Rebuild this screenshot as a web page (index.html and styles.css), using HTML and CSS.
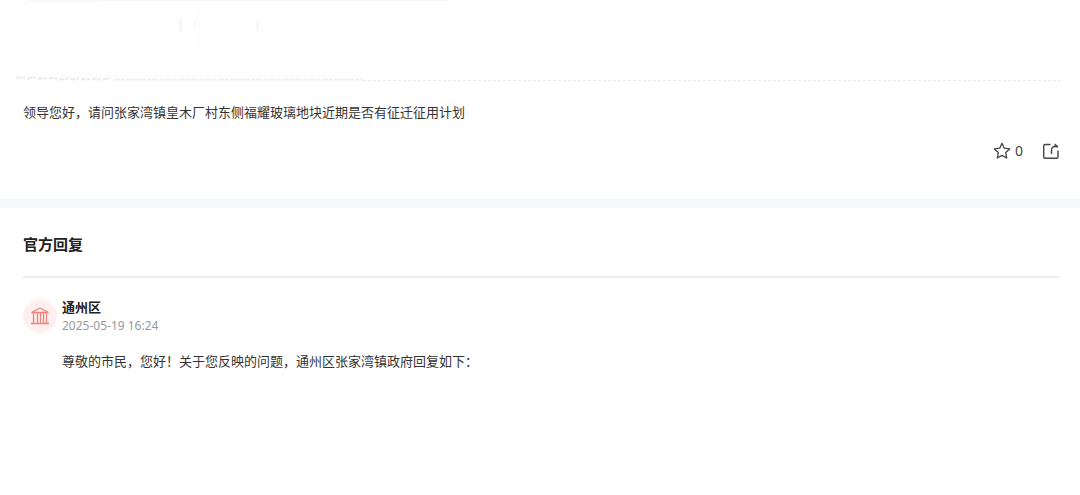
FILE: index.html
```html
<!DOCTYPE html>
<html lang="zh-CN">
<head>
<meta charset="utf-8">
<meta name="viewport" content="width=device-width, initial-scale=1">
<title>官方回复</title>
<link rel="stylesheet" href="styles.css">
</head>
<body>
<main class="page">
  <section class="question">
    <div class="question-meta">
      <svg class="redaction" width="450" height="83" viewBox="0 0 450 83" aria-hidden="true">
        <path d="M23 0h425v1H110l-30 1H40z" fill="#f7f7f8"/>
        <path d="M12 8h166v44H12zM195 8h62v44h-62zM258 8h65v44h-65zM14 52h349v29H14z" fill="#fefefe"/>
        <path d="M180 20q2 5 0 11" fill="none" stroke="#dfe8f0"/>
        <path d="M194.500 21v9" stroke="#eef8f5"/>
        <path d="M257.500 21v9" stroke="#f3e6ea"/>
        <path d="M14 75h97v4h252v3H14z" fill="#fdfdfd"/>
        <path d="M16 77.500h8l4 1 5-1 5 1h10l5-1 7 2 8-1 6 1 5-1 8 1 7-1 6 1 10-1" fill="none" stroke="#ececec" stroke-width="2" stroke-dasharray="5 1 3 2"/>
        <path d="M113 79.500h250" fill="none" stroke="#f1f1f1" stroke-width="2" stroke-dasharray="7 1 4 1"/>
      </svg>
    </div>
    <p class="question-text">领导您好，请问张家湾镇皇木厂村东侧福耀玻璃地块近期是否有征迁征用计划</p>
    <div class="actions">
      <button class="action" type="button" aria-label="收藏 0">
        <svg width="18" height="18" viewBox="0 0 18 18" aria-hidden="true"><path d="M9 1.300l2.300 4.900 5.400.7-4 3.700 1 5.400L9 13.400 4.300 16l1-5.400-4-3.700 5.400-.7z" fill="none" stroke="#444" stroke-width="1.300" stroke-linejoin="round"/></svg>
        <span>0</span>
      </button>
      <button class="action" type="button" aria-label="分享">
        <svg width="18" height="18" viewBox="0 0 18 18" aria-hidden="true"><path d="M8.500 2.500H3.200q-1.500 0-1.500 1.500v10.800q0 1.500 1.500 1.500h11.300q1.500 0 1.500-1.500V8.500M9.500 12V8.500q0-4 3.500-4H16" fill="none" stroke="#444" stroke-width="1.400"/><path d="M12.500 1.200l4 3.300-1.200 1-2.800-.8z" fill="#444"/></svg>
      </button>
    </div>
  </section>
  <section class="replies">
    <h2 class="replies-title">官方回复</h2>
    <article class="reply">
      <div class="avatar">
        <svg width="20" height="20" viewBox="0 0 20 20" aria-hidden="true"><path d="M1.500 6.500L10 2l8.500 4.500zM1 17.500h18M3.500 7v10.500M7.500 7v10.500M10.500 7v10.500M13.500 7v10.500M16.500 7v10.500" fill="none" stroke="#e9857f" stroke-width="1.300"/></svg>
      </div>
      <div class="reply-body">
        <h3 class="reply-name">通州区</h3>
        <time class="reply-time" datetime="2025-05-19T16:24">2025-05-19 16:24</time>
        <p class="reply-text">尊敬的市民，您好！关于您反映的问题，通州区张家湾镇政府回复如下：</p>
      </div>
    </article>
  </section>
</main>
</body>
</html>
```
FILE: styles.css
```css
* {
  box-sizing: border-box;
}

body {
  margin: 0;
  background: #fff;
  color: #333;
  font-family: "Noto Sans CJK SC", "Noto Sans", sans-serif;
  font-size: 13px;
  line-height: 20px;
}

h2,
h3,
p {
  margin: 0;
}

svg {
  display: block;
}

.question {
  padding-bottom: 37px;
  border-bottom: 9px solid #f6f8f9;
}

.question-meta {
  position: relative;
  height: 81px;
  margin: 0 20px 0 23px;
  background: repeating-linear-gradient(to right, #e9e9e9 0 3px, transparent 3px 5px) left bottom / 100% 1px no-repeat;
}

.redaction {
  position: absolute;
  top: 0;
  left: -23px;
}

.question-text {
  padding: 21px 23px 0;
}

.actions {
  display: flex;
  justify-content: flex-end;
  gap: 19px;
  padding: 18px 20px 0;
}

.action {
  display: flex;
  align-items: center;
  gap: 4px;
  height: 22px;
  padding: 0;
  border: 0;
  background: none;
  color: #444;
  font: 14px/20px "Noto Sans", sans-serif;
  cursor: pointer;
}

.replies {
  padding: 24px 20px 24px 23px;
}

.replies-title {
  padding-bottom: 20px;
  border-bottom: 2px solid #ededed;
  color: #222;
  font-size: 15px;
  line-height: 24px;
}

.reply {
  display: flex;
  gap: 5px;
  padding-top: 20px;
}

.avatar {
  display: flex;
  flex: none;
  align-items: center;
  justify-content: center;
  width: 34px;
  height: 34px;
  margin-top: 1px;
  border-radius: 50%;
  background: #ffefee;
}

.reply-name {
  color: #222;
  font-size: 13px;
  line-height: 18px;
}

.reply-time {
  display: block;
  color: #999;
  font-family: "Noto Sans", sans-serif;
  font-size: 12px;
  line-height: 20px;
}

.reply-text {
  padding-top: 15px;
}
```
